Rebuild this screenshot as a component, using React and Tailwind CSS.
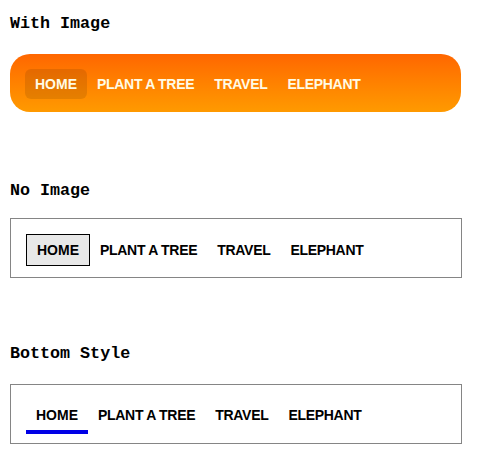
import React from "react";

const items = ["HOME", "PLANT A TREE", "TRAVEL", "ELEPHANT"];

const Heading = ({ children, className }) => (
    <div
        className={`h-5 leading-5 text-[16.7px] font-bold text-black ${className}`}
        style={{ fontFamily: '"Liberation Mono", "DejaVu Sans Mono", monospace' }}
    >
        {children}
    </div>
);

const App = () => {
    const navFont = { fontFamily: '"Liberation Sans", Arial, sans-serif' };

    return (
        <div className="w-[479px] h-[461px] bg-white pl-[10px]">
            <Heading className="mt-[14px]">With Image</Heading>

            {/* orange rounded bar */}
            <nav
                className="mt-[20px] w-[451px] h-[58px] rounded-[20px] bg-gradient-to-b from-[#ff6600] to-[#ff9a00] flex items-start pl-[15px] pt-[15px]"
                style={navFont}
            >
                {items.map((item, i) => (
                    <a
                        key={item}
                        className={`h-[30px] flex items-center px-[10px] rounded-[6px] text-[14px] font-bold text-[#fffbe6] ${
                            i === 0 ? "bg-black/10" : "tracking-[-0.3px]"
                        }`}
                    >
                        {item}
                    </a>
                ))}
            </nav>

            <Heading className="mt-[69px]">No Image</Heading>

            <nav
                className="mt-[17px] w-[452px] h-[60px] border border-[#858585] flex items-start pl-[15px] pt-[15px]"
                style={navFont}
            >
                {items.map((item, i) => (
                    <a
                        key={item}
                        className={`h-[32px] flex items-center px-[10px] text-[14px] font-bold text-black ${
                            i === 0 ? "border border-black bg-[#e8e8e8]" : "tracking-[-0.3px]"
                        }`}
                    >
                        {item}
                    </a>
                ))}
            </nav>

            <Heading className="mt-[66px]">Bottom Style</Heading>

            <nav
                className="mt-[20px] w-[452px] h-[60px] border border-[#858585] flex items-start pl-[15px] pt-[15px]"
                style={navFont}
            >
                {items.map((item, i) => (
                    <a
                        key={item}
                        className={`h-[34px] flex items-center px-[10px] border-b-[4px] text-[14px] font-bold text-black ${
                            i === 0 ? "border-[#0000e6]" : "border-transparent tracking-[-0.3px]"
                        }`}
                    >
                        {item}
                    </a>
                ))}
            </nav>
        </div>
    );
};

export default App;
